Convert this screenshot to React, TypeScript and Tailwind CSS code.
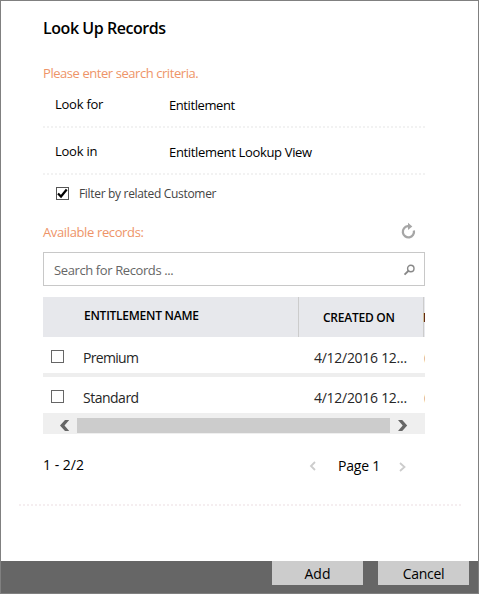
import React from 'react';

const dotted = 'bg-[repeating-linear-gradient(90deg,#f2f2f2_0_2px,transparent_2px_4px)]';

function Field({ label, value, className, valueClass }: { label: string; value: string; className: string; valueClass: string }) {
  return (
    <div className={`flex pl-3 text-[13px] ${className}`}>
      <span className="w-[114px] tracking-[-0.25px]">{label}</span>
      <span className={`pt-px ${valueClass}`}>{value}</span>
    </div>
  );
}

function Row({ name, nameClass }: { name: string; nameClass: string }) {
  return (
    <div className="flex h-9 text-[14px] text-[#262626]">
      <div className="ml-2 mt-[13px] size-[13px] shrink-0 border border-[#666] bg-white" />
      <div className={`ml-[19px] mt-[11px] w-[231px] shrink-0 ${nameClass}`}>{name}</div>
      <div className="mt-[11px] w-[109px] shrink-0 tracking-[-0.28px]">4/12/2016 12...</div>
      <div className="mt-[11px] shrink-0 pl-px text-[12px] text-[#888]">(</div>
    </div>
  );
}

export default function App() {
  return (
    <div className="h-[597px] w-[482px] overflow-hidden bg-white font-['Open_Sans','Noto_Sans',sans-serif] leading-5 text-black">
      <div className="flex h-[594px] w-[479px] flex-col border border-[#808080] bg-white">
        <div className="ml-[42px] mt-[17px] w-[382px] whitespace-nowrap">
          <h1 className="text-[16px] font-semibold tracking-[-0.45px]">Look Up Records</h1>
          <p className="mt-[25px] text-[13px] tracking-[-0.44px] text-[#ee9468]">Please enter search criteria.</p>
          <Field label="Look for" value="Entitlement" className="h-[43px] pt-[11px]" valueClass="tracking-[-0.42px]" />
          <div className={`h-0.5 ${dotted}`} />
          <Field label="Look in" value="Entitlement Lookup View" className="h-[45px] pt-[13px]" valueClass="tracking-[-0.34px]" />
          <div className={`h-0.5 ${dotted}`} />
          <div className="flex h-[47px] pl-[13px] pt-2">
            <div className="mt-1 flex size-[13px] items-center justify-center border border-[#555]">
              <svg width="11" height="11" viewBox="0 0 11 11" fill="none" stroke="#000" strokeWidth="2.2">
                <path d="M1 5.5 4 8.5 9.7 1.5" />
              </svg>
            </div>
            <span className="ml-[10px] mt-px text-[12px] tracking-[-0.32px] text-[#444]">Filter by related Customer</span>
          </div>
          <div className="flex h-[30px] justify-between">
            <span className="text-[13px] tracking-[-0.37px] text-[#ee9468]">Available records:</span>
            <svg className="mr-[9px]" width="15" height="18" viewBox="0 0 15 18" fill="none">
              <path d="M8 4.2H6.8A5.6 5.6 0 1 0 12.9 8.6" stroke="#a6a6a6" strokeWidth="2.3" />
              <path d="M7 .8 11.3 4.4 7 8Z" fill="#a6a6a6" />
            </svg>
          </div>
          <div className="flex h-[34px] justify-between border border-[#c8c8c8] pl-[10px] pr-[9px] pt-[7px] text-[13px] text-[#666]">
            <span className="tracking-[-0.39px]">Search for Records ...</span>
            <svg className="mt-1" width="12" height="12" viewBox="0 0 12 12" fill="none" stroke="#888">
              <circle cx="7.8" cy="4.5" r="3.2" strokeWidth="1.4" />
              <path d="M5.5 6.8 1.5 10.6" strokeWidth="1.9" />
            </svg>
          </div>
          <div className="mt-[11px] overflow-hidden">
            <div className="flex h-10 bg-[#e7e8ec] text-[12px] font-semibold">
              <div className="w-[256px] shrink-0 border-r border-[#ccc] pl-[41px] pt-[9px] tracking-[-0.25px]">ENTITLEMENT NAME</div>
              <div className="w-[125px] shrink-0 border-r border-[#ccc] pl-6 pt-[11px] tracking-[-0.25px]">CREATED ON</div>
              <div className="-ml-px shrink-0 pt-[11px]">M</div>
            </div>
            <Row name="Premium" nameClass="tracking-[-0.7px]" />
            <div className="h-1 bg-[#eee]" />
            <Row name="Standard" nameClass="tracking-[-0.5px]" />
            <div className="flex h-[21px] bg-[#efefef] pt-[5px]">
              <svg className="ml-[17px]" width="10" height="15" viewBox="0 0 10 15">
                <path d="M5 2h4.2L4.5 7.5 9.2 13H5L0 7.5Z" fill="#666" />
              </svg>
              <div className="ml-[7px] h-[15px] w-[313px] bg-[#ccc]" />
              <svg className="ml-2" width="10" height="15" viewBox="0 0 10 15">
                <path d="M4.2 2H0L4.7 7.5 0 13h4.2L9.2 7.5Z" fill="#666" />
              </svg>
            </div>
          </div>
          <div className="flex h-[70px] pt-[21px] text-[14px]">
            <span className="w-[266px]">1 - 2/2</span>
            <svg className="mt-[6px]" width="7" height="10" viewBox="0 0 7 10" fill="none" stroke="#ccc" strokeWidth="1.8">
              <path d="M6 1 2 5l4 4" />
            </svg>
            <span className="ml-[22px] mt-px w-[61px] tracking-[-0.2px]">Page 1</span>
            <svg className="mt-[7px]" width="8" height="10" viewBox="0 0 8 10" fill="none" stroke="#ccc" strokeWidth="1.8">
              <path d="m1 1 4.5 4L1 9" />
            </svg>
          </div>
        </div>
        <div className="ml-[18px] h-0.5 w-[442px] bg-[repeating-linear-gradient(90deg,#f5eef0_0_2px,transparent_2px_4px)]" />
        <div className="mt-auto flex h-8 justify-end gap-[15px] bg-[#666] pr-[9px] text-[14px]">
          <button className="h-6 w-[91px] bg-[#ccc] pt-0.5 leading-5">Add</button>
          <button className="h-6 w-[91px] bg-[#ccc] pt-0.5 leading-5 tracking-[-0.3px]">Cancel</button>
        </div>
      </div>
    </div>
  );
}
